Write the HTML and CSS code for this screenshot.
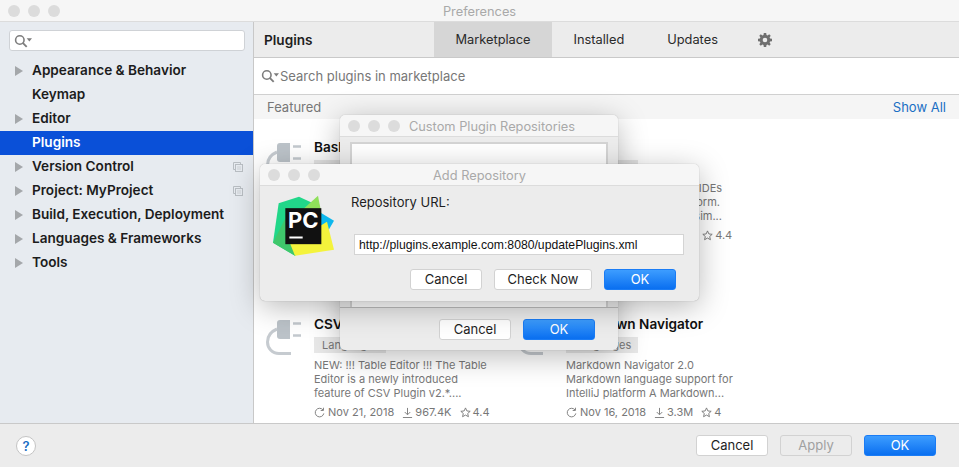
FILE: index.html
```html
<!DOCTYPE html>
<html lang="en">
<head>
  <meta charset="UTF-8">
  <title>Preferences</title>
  <link rel="stylesheet" href="styles.css">
</head>
<body>
  <div class="window">
    <div class="titlebar">
      <div class="lights"><span></span><span></span><span></span></div>
      <div class="title">Preferences</div>
    </div>

    <div class="main">
      <aside class="sidebar">
        <div class="side-search">
          <svg class="search-icon" width="18" height="14" viewBox="0 0 17 13"><circle cx="5.500" cy="5.500" r="4" fill="none" stroke="#7d7d7d" stroke-width="1.500"/><path d="M8.500 8.500l3.500 3.500" stroke="#7d7d7d" stroke-width="1.800"/><path d="M12 4h5l-2.500 3z" fill="#7d7d7d"/></svg>
        </div>
        <ul class="tree">
          <li class="tree-item"><i class="arrow"></i>Appearance &amp; Behavior</li>
          <li class="tree-item">Keymap</li>
          <li class="tree-item"><i class="arrow"></i>Editor</li>
          <li class="tree-item selected">Plugins</li>
          <li class="tree-item"><i class="arrow"></i>Version Control
            <svg class="copy" width="10" height="10" viewBox="0 0 10 10"><path d="M.5.5h7v2M.5.5v7h2" fill="none" stroke="#b9bec3"/><rect x="2.500" y="2.500" width="7" height="7" fill="none" stroke="#b9bec3"/><path d="M4 5h4M4 7h4" stroke="#cdd1d5"/></svg>
          </li>
          <li class="tree-item"><i class="arrow"></i>Project: MyProject
            <svg class="copy" width="10" height="10" viewBox="0 0 10 10"><path d="M.5.5h7v2M.5.5v7h2" fill="none" stroke="#b9bec3"/><rect x="2.500" y="2.500" width="7" height="7" fill="none" stroke="#b9bec3"/><path d="M4 5h4M4 7h4" stroke="#cdd1d5"/></svg>
          </li>
          <li class="tree-item"><i class="arrow"></i>Build, Execution, Deployment</li>
          <li class="tree-item"><i class="arrow"></i>Languages &amp; Frameworks</li>
          <li class="tree-item"><i class="arrow"></i>Tools</li>
        </ul>
      </aside>

      <section class="panel">
        <div class="panel-header">
          <div class="panel-title">Plugins</div>
          <div class="tabs">
            <div class="tab active">Marketplace</div>
            <div class="tab">Installed</div>
            <div class="tab">Updates</div>
          </div>
          <svg class="gear" width="14" height="14" viewBox="0 0 14 14"><path fill="#6f6f6f" fill-rule="evenodd" d="M5.800 0h2.400l.3 1.900 1.100.5L11.200 1.300l1.500 1.500-1.100 1.600.5 1.100 1.900.3v2.400l-1.900.3-.5 1.100 1.100 1.600-1.500 1.500-1.600-1.100-1.100.5-.3 1.900H5.800l-.3-1.900-1.100-.5-1.600 1.100-1.500-1.500 1.100-1.600-.5-1.100L0 8.200V5.800l1.900-.3.5-1.100-1.100-1.600 1.500-1.500 1.600 1.100 1.100-.5zM7 4.700a2.300 2.300 0 1 0 0 4.600 2.300 2.300 0 0 0 0-4.600z"/></svg>
        </div>

        <div class="plugin-search">
          <svg class="search-icon" width="18" height="14" viewBox="0 0 17 13"><circle cx="5.500" cy="5.500" r="4" fill="none" stroke="#7d7d7d" stroke-width="1.500"/><path d="M8.500 8.500l3.500 3.500" stroke="#7d7d7d" stroke-width="1.800"/><path d="M12 4h5l-2.500 3z" fill="#7d7d7d"/></svg>
          <span>Search plugins in marketplace</span>
        </div>

        <div class="featured">
          <span>Featured</span>
          <span class="show-all">Show All</span>
        </div>

        <div class="cards">
          <div class="card">
            <svg class="plug" width="36" height="36" viewBox="0 0 36 36"><use href="#plug-shape"/></svg>
            <div class="card-body">
              <div class="card-name">BashSupport</div>
              <div class="tag">Languages</div>
              <p class="card-desc">Bash language support for the<br>IntelliJ platform, with syntax<br>highlighting and more...</p>
              <div class="meta">
                <svg width="11" height="11" viewBox="0 0 12 12"><use href="#refresh"/></svg><span>Nov 12, 2018</span>
                <svg width="11" height="11" viewBox="0 0 12 12"><use href="#download"/></svg><span>2.1M</span>
                <svg width="11" height="11" viewBox="0 0 12 12"><use href="#star"/></svg><span>4.5</span>
              </div>
            </div>
          </div>
          <div class="card">
            <svg class="plug" width="36" height="36" viewBox="0 0 36 36"><use href="#plug-shape"/></svg>
            <div class="card-body">
              <div class="card-name">Rust</div>
              <div class="tag">Languages</div>
              <p class="card-desc">Rust language support in IDEs<br>on the IntelliJ based platform.<br>Offers code completion, sim...</p>
              <div class="meta">
                <svg width="11" height="11" viewBox="0 0 12 12"><use href="#refresh"/></svg><span>Nov 20, 2018</span>
                <svg width="11" height="11" viewBox="0 0 12 12"><use href="#download"/></svg><span>1.4M</span>
                <svg width="11" height="11" viewBox="0 0 12 12"><use href="#star"/></svg><span>4.4</span>
              </div>
            </div>
          </div>
          <div class="card">
            <svg class="plug" width="36" height="36" viewBox="0 0 36 36"><use href="#plug-shape"/></svg>
            <div class="card-body">
              <div class="card-name">CSV Plugin</div>
              <div class="tag">Languages</div>
              <p class="card-desc">NEW: !!! Table Editor !!! The Table<br>Editor is a newly introduced<br>feature of CSV Plugin v2.*....</p>
              <div class="meta">
                <svg width="11" height="11" viewBox="0 0 12 12"><use href="#refresh"/></svg><span>Nov 21, 2018</span>
                <svg width="11" height="11" viewBox="0 0 12 12"><use href="#download"/></svg><span>967.4K</span>
                <svg width="11" height="11" viewBox="0 0 12 12"><use href="#star"/></svg><span>4.4</span>
              </div>
            </div>
          </div>
          <div class="card">
            <svg class="plug" width="36" height="36" viewBox="0 0 36 36"><use href="#plug-shape"/></svg>
            <div class="card-body">
              <div class="card-name">Markdown Navigator</div>
              <div class="tag">Languages</div>
              <p class="card-desc">Markdown Navigator 2.0<br>Markdown language support for<br>IntelliJ platform A Markdown...</p>
              <div class="meta">
                <svg width="11" height="11" viewBox="0 0 12 12"><use href="#refresh"/></svg><span>Nov 16, 2018</span>
                <svg width="11" height="11" viewBox="0 0 12 12"><use href="#download"/></svg><span>3.3M</span>
                <svg width="11" height="11" viewBox="0 0 12 12"><use href="#star"/></svg><span>4</span>
              </div>
            </div>
          </div>
        </div>
      </section>
    </div>

    <div class="footer">
      <div class="help">?</div>
      <div class="buttons">
        <button class="btn">Cancel</button>
        <button class="btn disabled">Apply</button>
        <button class="btn primary">OK</button>
      </div>
    </div>

    <!-- Custom Plugin Repositories dialog -->
    <div class="dialog repos-dialog">
      <div class="titlebar dialog-titlebar repos-titlebar">
        <div class="lights"><span></span><span></span><span></span></div>
        <div class="title">Custom Plugin Repositories</div>
      </div>
      <div class="repos-list"></div>
      <div class="repos-buttons">
        <button class="btn">Cancel</button>
        <button class="btn primary">OK</button>
      </div>
    </div>

    <!-- Add Repository dialog -->
    <div class="dialog add-dialog">
      <div class="titlebar dialog-titlebar">
        <div class="lights"><span></span><span></span><span></span></div>
        <div class="title">Add Repository</div>
      </div>
      <div class="add-body">
        <svg class="app-logo" width="65" height="67" viewBox="30 25 195 200">
          <polygon points="50,55 111,36 168,62 130,190 99,213 33,174" fill="#21d789"/>
          <polygon points="33,174 70,100 99,213" fill="#3fc76b"/>
          <polygon points="125,72 168,33 180,95" fill="#8fe05a"/>
          <polygon points="170,80 216,108 195,144 170,120" fill="#0db7ed"/>
          <polygon points="85,178 195,111 216,195 99,213" fill="#f4f33c"/>
          <rect x="70" y="70" width="108" height="108" fill="#111"/>
          <text class="logo-text" x="78" y="130">PC</text>
          <rect x="82" y="155" width="40" height="6" fill="#fff"/>
        </svg>
        <div class="add-form">
          <label class="url-label">Repository URL:</label>
          <div class="url-input">http://plugins.example.com:8080/updatePlugins.xml</div>
          <div class="add-buttons">
            <button class="btn">Cancel</button>
            <button class="btn check">Check Now</button>
            <button class="btn primary">OK</button>
          </div>
        </div>
      </div>
    </div>
  </div>

  <!-- shared icons -->
  <svg class="defs" width="0" height="0">
    <defs>
      <g id="plug-shape">
        <path d="M11 4a3 3 0 0 1 3-3h10v19H14a3 3 0 0 1-3-3z" fill="#bcc3c9"/>
        <path d="M27 4.500h8M27 16.500h8" stroke="#c3c9ce" stroke-width="2.500"/>
        <path d="M11 10C4 13 1.500 17 1.500 23S6 34.500 13 34.500h12" fill="none" stroke="#c6cbd0" stroke-width="3"/>
      </g>
      <g id="refresh" fill="none" stroke="#777">
        <path d="M9.800 3.200A4.700 4.700 0 1 0 10.700 7"/>
        <path d="M10.300.8v3H7.300" stroke-width="1"/>
      </g>
      <g id="download" fill="none" stroke="#777">
        <path d="M6 1v7M3 5.500l3 3 3-3"/>
        <path d="M1 11.500h10"/>
      </g>
      <path id="star" d="M6 1l1.500 3.300 3.600.4-2.700 2.400.8 3.500L6 8.800l-3.200 1.800.8-3.500L.9 4.700l3.600-.4z" fill="none" stroke="#777"/>
    </defs>
  </svg>
</body>
</html>
```

FILE: styles.css
```css
* {
  box-sizing: border-box;
}

body {
  margin: 0;
  font-family: Inter, "Noto Sans", sans-serif;
  font-size: 13px;
  color: #1e1e1e;
  background-color: #ececec;
}

.window {
  position: relative;
  display: flex;
  flex-direction: column;
  width: 959px;
  height: 467px;
  overflow: hidden;
}

.defs {
  position: absolute;
}

/* Title bars */
.titlebar {
  position: relative;
  display: flex;
  align-items: center;
  justify-content: center;
  height: 22px;
  flex: none;
  background-color: #f6f6f6;
  border-bottom: 1px solid #dcdcdc;
}

.lights {
  position: absolute;
  left: 8px;
  top: 5px;
  display: flex;
  gap: 8px;
}

.lights span {
  width: 12px;
  height: 12px;
  border-radius: 50%;
  background-color: #dcdcdc;
}

.title {
  padding-top: 2px;
  color: #a9a9a9;
  font-size: 12.800px;
}

.main {
  display: flex;
  flex: 1;
  min-height: 0;
}

/* Sidebar */
.sidebar {
  width: 254px;
  flex: none;
  padding-top: 8px;
  background-color: #e7ebf0;
  border-right: 1px solid #c8c8c8;
}

.side-search {
  display: flex;
  align-items: center;
  height: 21px;
  margin: 0 8px 0 9px;
  padding-left: 4px;
  background-color: #fff;
  border: 1px solid #cfd2d6;
  border-radius: 3px;
}

.tree {
  list-style: none;
  margin: 8px 0 0;
  padding: 0;
}

.tree-item {
  position: relative;
  height: 24px;
  padding-left: 32px;
  line-height: 22px;
  font-size: 13.600px;
  font-weight: 600;
  color: #1c1c1c;
}

.tree-item.selected {
  background-color: #0a50d8;
  color: #fff;
}

.arrow {
  position: absolute;
  left: 15px;
  top: 7px;
  border-left: 8px solid #a4a7aa;
  border-top: 5px solid transparent;
  border-bottom: 5px solid transparent;
}

.copy {
  position: absolute;
  right: 10px;
  top: 7px;
}

/* Plugin panel */
.panel {
  display: flex;
  flex-direction: column;
  flex: 1;
  min-width: 0;
  background-color: #fff;
}

.panel-header {
  display: flex;
  align-items: center;
  height: 36px;
  flex: none;
  background-color: #ececec;
  border-bottom: 1px solid #c9c9c9;
}

.panel-title {
  width: 180px;
  padding-left: 10px;
  font-size: 13.600px;
  font-weight: 600;
}

.tabs {
  display: flex;
  align-self: stretch;
}

.tab {
  display: flex;
  align-items: center;
  padding: 0 21.500px;
  font-size: 12.800px;
  color: #2a2a2a;
}

.tab.active {
  background-color: #d6d6d6;
}

.gear {
  margin-left: 19px;
}

.plugin-search {
  display: flex;
  align-items: center;
  gap: 1px;
  height: 37px;
  flex: none;
  padding-left: 7px;
  color: #777;
  border-bottom: 1px solid #d0d0d0;
}

.featured {
  display: flex;
  justify-content: space-between;
  align-items: center;
  height: 24px;
  flex: none;
  padding: 0 13px;
  background-color: #f5f5f5;
  color: #777;
}

.show-all {
  color: #1a6fc4;
}

.cards {
  display: grid;
  grid-template-columns: 252px 252px;
  grid-auto-rows: 177px;
  padding: 20px 0 0 12px;
}

.card {
  display: flex;
  gap: 12px;
}

.plug {
  flex: none;
  margin-top: 3px;
}

.card-name {
  font-size: 13.600px;
  font-weight: 600;
  color: #111;
  line-height: 16px;
}

.tag {
  width: 72px;
  height: 16px;
  margin-top: 5px;
  padding-left: 8px;
  background-color: #e8e8e8;
  color: #777;
  font-size: 11px;
  line-height: 16px;
}

.card-desc {
  margin: 5px 0 0;
  color: #777;
  font-size: 11px;
  line-height: 14px;
  white-space: nowrap;
}

.meta {
  display: flex;
  align-items: center;
  margin-top: 5px;
  color: #777;
  font-size: 11px;
}

.meta svg {
  margin-right: 2px;
}

.meta svg:first-child {
  margin-right: 3px;
}

.meta span {
  margin-right: 8px;
}

/* Footer */
.footer {
  display: flex;
  justify-content: space-between;
  align-items: center;
  height: 44px;
  flex: none;
  padding: 0 23px 0 16px;
  background-color: #ececec;
  border-top: 1px solid #c9c9c9;
}

.help {
  width: 20px;
  height: 20px;
  border-radius: 50%;
  background-color: #fff;
  border: 1px solid #c4c4c4;
  color: #1a6fc4;
  font-size: 13px;
  font-weight: 600;
  line-height: 18px;
  text-align: center;
}

.buttons {
  display: flex;
  gap: 12px;
}

.btn {
  width: 72px;
  height: 21px;
  padding: 0 0 2px;
  font-family: inherit;
  font-size: 13px;
  color: #1e1e1e;
  background-color: #fff;
  border: 1px solid #d2d2d2;
  border-radius: 3px;
}

.btn.primary {
  color: #fff;
  background: linear-gradient(#3d9dff, #0a6ff0);
  border-color: #1a7cf5;
}

.btn.disabled {
  color: #a0a0a0;
  background-color: #ececec;
}

.btn.check {
  width: 98px;
}

/* Dialogs float above the window */
.dialog {
  position: absolute;
  display: flex;
  flex-direction: column;
  background-color: #ececec;
  border-radius: 5px;
  box-shadow: 0 0 1px rgba(0, 0, 0, 0.35), 0 6px 30px rgba(0, 0, 0, 0.28);
}

.dialog-titlebar {
  border-radius: 5px 5px 0 0;
}

.repos-titlebar {
  padding-left: 26px;
}

.repos-dialog {
  left: 340px;
  top: 115px;
  width: 278px;
  height: 235px;
}

.repos-list {
  height: 165px;
  margin: 5px 10px 0;
  background-color: #fff;
  border: 2px solid #d4d4d4;
  border-bottom: none;
}

.repos-buttons {
  display: flex;
  justify-content: flex-end;
  gap: 12px;
  padding: 11px 23px 0 0;
  border-top: 1px solid #bdbdbd;
}

.add-dialog {
  left: 260px;
  top: 164px;
  width: 439px;
  height: 137px;
}

.add-body {
  display: flex;
  padding: 7px 15px 0 12px;
}

.app-logo {
  flex: none;
}

.logo-text {
  fill: #fff;
  font-size: 66px;
  font-weight: 700;
}

.add-form {
  flex: 1;
  padding: 1px 0 0 14px;
}

.url-label {
  display: block;
  line-height: 16px;
}

.url-input {
  height: 21px;
  margin: 24px 0 14px 3px;
  padding: 2px 0 0 4px;
  background-color: #fff;
  border: 1px solid #d4d4d4;
  font-family: "Liberation Sans", Arial, sans-serif;
  font-size: 12.200px;
  line-height: 17px;
  color: #111;
}

.add-buttons {
  display: flex;
  justify-content: flex-end;
  gap: 12px;
  padding-right: 8px;
}
```
